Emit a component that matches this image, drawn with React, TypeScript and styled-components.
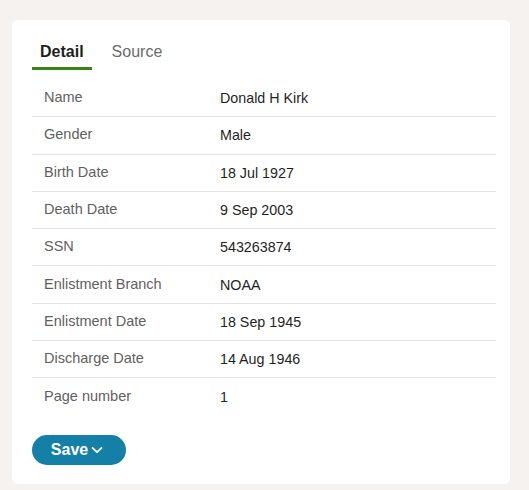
import React, { useState } from "react";
import styled, { createGlobalStyle } from "styled-components";

const GlobalStyle = createGlobalStyle`
    html, body {
        margin: 0;
        padding: 0;
        background: #f5f2ef;
        font-family: "Liberation Sans", Arial, sans-serif;
    }
`;

const Page = styled.div`
    padding: 20px 19px 6px 12px;
`;

const Card = styled.div`
    background: #ffffff;
    border-radius: 6px;
    padding: 17px 14px 19px 20px;
`;

const Tabs = styled.div`
    display: flex;
    gap: 12px;
`;

const Tab = styled.button<{ $active?: boolean }>`
    border: none;
    background: none;
    padding: 6px 8px 6px;
    font-family: inherit;
    font-size: 16px;
    font-weight: ${(p) => (p.$active ? 700 : 400)};
    color: ${(p) => (p.$active ? "#1e1e1e" : "#6b6b6b")};
    border-bottom: 3px solid ${(p) => (p.$active ? "#3a8512" : "transparent")};
    cursor: pointer;
`;

const Table = styled.div`
    margin-top: 10px;
`;

const Row = styled.div`
    display: grid;
    grid-template-columns: 176px 1fr;
    height: 36.3px;
    align-items: center;
    padding: 0 12px;
    border-bottom: 1px solid #e3e3e3;

    &:last-child {
        border-bottom: none;
    }
`;

const Label = styled.span`
    font-size: 14.5px;
    color: #5f5f5f;
    margin-top: -2px;
`;

const Value = styled.span`
    font-size: 14.3px;
    color: #1f1f1f;
`;

const SaveButton = styled.button`
    margin-top: 20px;
    height: 30px;
    width: 94px;
    border: none;
    border-radius: 15px;
    background: #1480a8;
    color: #ffffff;
    font-family: inherit;
    font-size: 16px;
    font-weight: 700;
    display: flex;
    align-items: center;
    justify-content: center;
    gap: 3px;
    padding: 0 4px 0 0;
    cursor: pointer;
`;

const rows: [string, string][] = [
    ["Name", "Donald H Kirk"],
    ["Gender", "Male"],
    ["Birth Date", "18 Jul 1927"],
    ["Death Date", "9 Sep 2003"],
    ["SSN", "543263874"],
    ["Enlistment Branch", "NOAA"],
    ["Enlistment Date", "18 Sep 1945"],
    ["Discharge Date", "14 Aug 1946"],
    ["Page number", "1"],
];

const App: React.FC = () => {
    const [tab, setTab] = useState("detail");

    return (
        <>
            <GlobalStyle />
            <Page>
                <Card>
                    <Tabs>
                        <Tab $active={tab === "detail"} onClick={() => setTab("detail")}>
                            Detail
                        </Tab>
                        <Tab $active={tab === "source"} onClick={() => setTab("source")}>
                            Source
                        </Tab>
                    </Tabs>
                    <Table>
                        {rows.map(([label, value]) => (
                            <Row key={label}>
                                <Label>{label}</Label>
                                <Value>{value}</Value>
                            </Row>
                        ))}
                    </Table>
                    <SaveButton>
                        Save
                        <svg width="12" height="12" viewBox="0 0 12 12" fill="none">
                            <path d="M1.5 3.8 L6 8.2 L10.5 3.8" stroke="#fff" strokeWidth="1.8" strokeLinecap="round" strokeLinejoin="round" />
                        </svg>
                    </SaveButton>
                </Card>
            </Page>
        </>
    );
};

export default App;
